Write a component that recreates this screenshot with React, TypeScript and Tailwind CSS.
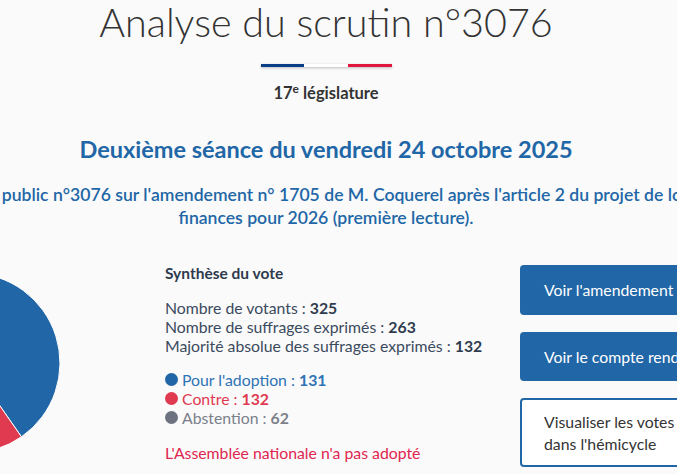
const BLUE = '#2166a6';

function polar(cx: number, cy: number, r: number, deg: number) {
  const a = ((deg - 90) * Math.PI) / 180;
  return [cx + r * Math.cos(a), cy + r * Math.sin(a)];
}

function slice(start: number, end: number) {
  const [x1, y1] = polar(90, 90, 90, start);
  const [x2, y2] = polar(90, 90, 90, end);
  const large = end - start > 180 ? 1 : 0;
  return `M90 90 L${x1} ${y1} A90 90 0 ${large} 1 ${x2} ${y2} Z`;
}

function Pie() {
  const total = 325;
  const pour = (131 / total) * 360;
  const contre = (132 / total) * 360;
  return (
    <svg width="180" height="180" viewBox="0 0 180 180">
      <path d={slice(0, pour)} fill={BLUE} stroke="#fff" strokeWidth="1" />
      <path d={slice(pour, pour + contre)} fill="#e03a51" stroke="#fff" strokeWidth="1" />
      <path d={slice(pour + contre, 360)} fill="#6c7280" stroke="#fff" strokeWidth="1" />
    </svg>
  );
}

export default function App() {
  return (
    <div
      className="w-full h-[474px] overflow-hidden bg-[#fafafa] text-[#333]"
      style={{ fontFamily: 'Lato, "Open Sans", sans-serif' }}
    >
      <div className="w-[892px] ml-[-120px] flex flex-col items-center">
        <h1 className="text-[39.5px] font-light leading-[44px] text-[#333]">
          Analyse du scrutin n°3076
        </h1>

        <div className="flex mt-[20px] h-[3px] w-[131px] shadow-[0_1px_3px_rgba(0,0,0,0.25)]">
          <div className="flex-1 bg-[#0a3d87]" />
          <div className="flex-1 bg-white" />
          <div className="flex-1 bg-[#e1163c]" />
        </div>

        <p className="mt-[16px] text-[16.5px] font-bold leading-[20px] text-[#333]">
          17<sup className="text-[12px] font-bold">e</sup> législature
        </p>

        <h2 className="mt-[32px] text-[23.5px] font-bold leading-[28px] text-[#2166a6]">
          Deuxième séance du vendredi 24 octobre 2025
        </h2>

        <p className="mt-[20px] w-[800px] text-center text-[17.6px] font-semibold leading-[23px] text-[#2166a6]">
          Scrutin public n°3076 sur l'amendement n° 1705 de M. Coquerel après l'article 2 du projet de loi de
          finances pour 2026 (première lecture).
        </p>

        <div className="flex w-[892px] mt-[36px]">
          <div className="w-[285px] shrink-0 pt-[8px]">
            <Pie />
          </div>

          <div className="w-[355px] shrink-0 text-[15.8px] leading-[19px] text-[#3b4a5e]">
            <p className="mt-[-1px] text-[15.5px] font-bold text-[#2e3b4e]">Synthèse du vote</p>
            <div className="mt-[15px]">
              <p>
                Nombre de votants : <b className="font-bold text-[#2e3b4e]">325</b>
              </p>
              <p>
                Nombre de suffrages exprimés : <b className="font-bold text-[#2e3b4e]">263</b>
              </p>
              <p>
                Majorité absolue des suffrages exprimés : <b className="font-bold text-[#2e3b4e]">132</b>
              </p>
            </div>
            <div className="mt-[15px]">
              <p className="flex items-center text-[#2e73b5]">
                <span className="w-[13px] h-[13px] rounded-full bg-[#2166a6] mr-[4px]" />
                Pour l'adoption :&nbsp;<b className="font-bold">131</b>
              </p>
              <p className="flex items-center text-[#e03a51]">
                <span className="w-[13px] h-[13px] rounded-full bg-[#e03a51] mr-[4px]" />
                Contre :&nbsp;<b className="font-bold">132</b>
              </p>
              <p className="flex items-center text-[#7b808a]">
                <span className="w-[13px] h-[13px] rounded-full bg-[#6c7280] mr-[4px]" />
                Abstention :&nbsp;<b className="font-bold">62</b>
              </p>
            </div>
            <p className="mt-[16px] text-[#e0264f]">L'Assemblée nationale n'a pas adopté</p>
          </div>

          <div className="w-[250px] shrink-0 flex flex-col gap-[17px] text-[15.8px]">
            <div className="h-[50px] rounded-[4px] bg-[#2166a6] text-white flex items-center px-[24px]">
              Voir l'amendement
            </div>
            <div className="h-[49px] rounded-[4px] bg-[#2166a6] text-white flex items-center px-[24px]">
              Voir le compte rendu
            </div>
            <div className="h-[69px] rounded-[4px] border-2 border-[#2166a6] bg-white text-[#333] flex items-center px-[22px] leading-[22px]">
              Visualiser les votes
              <br />
              dans l'hémicycle
            </div>
          </div>
        </div>
      </div>
    </div>
  );
}
